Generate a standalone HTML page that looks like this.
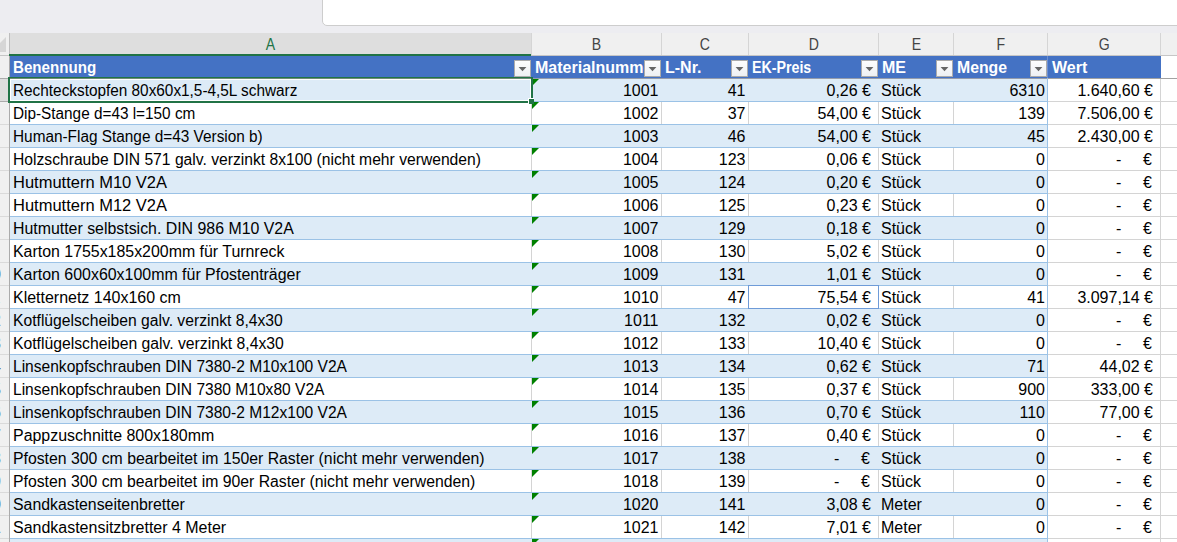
<!DOCTYPE html><html><head><meta charset="utf-8"><style>
html,body{margin:0;padding:0;}
body{width:1177px;height:542px;overflow:hidden;position:relative;background:#fff;font-family:"Liberation Sans",sans-serif;}
div{position:absolute;box-sizing:border-box;}
.t{white-space:nowrap;font-size:16px;line-height:22px;color:#000;}
.r{text-align:right;}
.h{white-space:nowrap;font-size:16px;font-weight:bold;line-height:22px;color:#fff;}
.fb{width:17px;height:17px;border:1px solid #ABABAB;background:linear-gradient(#FDFDFD,#EEF0F3);}
.tri{width:0;height:0;border-top:7px solid #008000;border-right:7px solid transparent;}
.cl{font-size:16px;line-height:22px;color:#444;text-align:center;}
</style></head><body>
<div style="left:0;top:0;width:1177px;height:33px;background:#EDEDF1;"></div>
<div style="left:322px;top:-6px;width:900px;height:32px;background:#fff;border:1px solid #CDCDCD;border-radius:5px;"></div>
<div style="left:0;top:33px;width:1177px;height:23px;background:#F0F0F0;border-bottom:1px solid #C6C6C6;"></div>
<div style="left:10px;top:33px;width:521px;height:23px;background:#DEDEDE;border-bottom:2px solid #217346;"></div>
<div style="left:9px;top:54px;width:1px;height:2px;background:#217346;"></div>
<div style="left:-9px;top:37px;width:0;height:0;border-bottom:15px solid #D6D6D6;border-left:15px solid transparent;"></div>
<div class="cl" style="left:10px;top:34px;width:521px;color:#217346;"><span style="display:inline-block;transform:scaleX(0.88);">A</span></div>
<div class="cl" style="left:532px;top:34px;width:129px;color:#444;"><span style="display:inline-block;transform:scaleX(0.88);">B</span></div>
<div class="cl" style="left:662px;top:34px;width:86px;color:#444;"><span style="display:inline-block;transform:scaleX(0.88);">C</span></div>
<div class="cl" style="left:749px;top:34px;width:129px;color:#444;"><span style="display:inline-block;transform:scaleX(0.88);">D</span></div>
<div class="cl" style="left:879px;top:34px;width:74px;color:#444;"><span style="display:inline-block;transform:scaleX(0.88);">E</span></div>
<div class="cl" style="left:954px;top:34px;width:93px;color:#444;"><span style="display:inline-block;transform:scaleX(0.88);">F</span></div>
<div class="cl" style="left:1048px;top:34px;width:112px;color:#444;"><span style="display:inline-block;transform:scaleX(0.88);">G</span></div>
<div style="left:531px;top:33px;width:1px;height:22px;background:#D5D5D5;"></div>
<div style="left:661px;top:33px;width:1px;height:22px;background:#D5D5D5;"></div>
<div style="left:748px;top:33px;width:1px;height:22px;background:#D5D5D5;"></div>
<div style="left:878px;top:33px;width:1px;height:22px;background:#D5D5D5;"></div>
<div style="left:953px;top:33px;width:1px;height:22px;background:#D5D5D5;"></div>
<div style="left:1047px;top:33px;width:1px;height:22px;background:#D5D5D5;"></div>
<div style="left:1160px;top:33px;width:1px;height:22px;background:#D5D5D5;"></div>
<div style="left:9px;top:33px;width:1px;height:21px;background:#BDBDBD;"></div>
<div style="left:1160px;top:33px;width:1px;height:22px;background:#D5D5D5;"></div>
<div style="left:0;top:56px;width:9px;height:486px;background:#F0F0F0;"></div>
<div style="left:0;top:79px;width:9px;height:22px;background:#DEDEDE;"></div>
<div style="left:9px;top:56px;width:1px;height:486px;background:#ABABAB;"></div>
<div style="left:0;top:78px;width:9px;height:1px;background:#ABABAB;"></div>
<div style="left:0;top:101px;width:9px;height:1px;background:#ABABAB;"></div>
<div style="left:0;top:124px;width:9px;height:1px;background:#DADADA;"></div>
<div style="left:0;top:147px;width:9px;height:1px;background:#DADADA;"></div>
<div style="left:0;top:170px;width:9px;height:1px;background:#DADADA;"></div>
<div style="left:0;top:193px;width:9px;height:1px;background:#DADADA;"></div>
<div style="left:0;top:216px;width:9px;height:1px;background:#DADADA;"></div>
<div style="left:0;top:239px;width:9px;height:1px;background:#DADADA;"></div>
<div style="left:0;top:262px;width:9px;height:1px;background:#DADADA;"></div>
<div style="left:0;top:285px;width:9px;height:1px;background:#DADADA;"></div>
<div style="left:0;top:308px;width:9px;height:1px;background:#DADADA;"></div>
<div style="left:0;top:331px;width:9px;height:1px;background:#DADADA;"></div>
<div style="left:0;top:354px;width:9px;height:1px;background:#DADADA;"></div>
<div style="left:0;top:377px;width:9px;height:1px;background:#DADADA;"></div>
<div style="left:0;top:400px;width:9px;height:1px;background:#DADADA;"></div>
<div style="left:0;top:423px;width:9px;height:1px;background:#DADADA;"></div>
<div style="left:0;top:446px;width:9px;height:1px;background:#DADADA;"></div>
<div style="left:0;top:469px;width:9px;height:1px;background:#DADADA;"></div>
<div style="left:0;top:492px;width:9px;height:1px;background:#DADADA;"></div>
<div style="left:0;top:515px;width:9px;height:1px;background:#DADADA;"></div>
<div style="left:0;top:538px;width:9px;height:1px;background:#DADADA;"></div>
<div style="left:0;top:561px;width:9px;height:1px;background:#DADADA;"></div>
<div style="left:0;top:56px;width:9px;height:22px;overflow:hidden;"><div class="t" style="left:-28px;top:1px;width:40px;text-align:center;color:#444;font-size:16px;">1</div></div>
<div style="left:0;top:79px;width:9px;height:22px;overflow:hidden;"><div class="t" style="left:-28px;top:1px;width:40px;text-align:center;color:#444;font-size:16px;">2</div></div>
<div style="left:0;top:102px;width:9px;height:22px;overflow:hidden;"><div class="t" style="left:-28px;top:1px;width:40px;text-align:center;color:#444;font-size:16px;">3</div></div>
<div style="left:0;top:125px;width:9px;height:22px;overflow:hidden;"><div class="t" style="left:-28px;top:1px;width:40px;text-align:center;color:#444;font-size:16px;">4</div></div>
<div style="left:0;top:148px;width:9px;height:22px;overflow:hidden;"><div class="t" style="left:-28px;top:1px;width:40px;text-align:center;color:#444;font-size:16px;">5</div></div>
<div style="left:0;top:171px;width:9px;height:22px;overflow:hidden;"><div class="t" style="left:-28px;top:1px;width:40px;text-align:center;color:#444;font-size:16px;">6</div></div>
<div style="left:0;top:194px;width:9px;height:22px;overflow:hidden;"><div class="t" style="left:-28px;top:1px;width:40px;text-align:center;color:#444;font-size:16px;">7</div></div>
<div style="left:0;top:217px;width:9px;height:22px;overflow:hidden;"><div class="t" style="left:-28px;top:1px;width:40px;text-align:center;color:#444;font-size:16px;">8</div></div>
<div style="left:0;top:240px;width:9px;height:22px;overflow:hidden;"><div class="t" style="left:-28px;top:1px;width:40px;text-align:center;color:#444;font-size:16px;">9</div></div>
<div style="left:0;top:263px;width:9px;height:22px;overflow:hidden;"><div class="t" style="left:-28px;top:1px;width:40px;text-align:center;color:#444;font-size:16px;">10</div></div>
<div style="left:0;top:286px;width:9px;height:22px;overflow:hidden;"><div class="t" style="left:-28px;top:1px;width:40px;text-align:center;color:#444;font-size:16px;">11</div></div>
<div style="left:0;top:309px;width:9px;height:22px;overflow:hidden;"><div class="t" style="left:-28px;top:1px;width:40px;text-align:center;color:#444;font-size:16px;">12</div></div>
<div style="left:0;top:332px;width:9px;height:22px;overflow:hidden;"><div class="t" style="left:-28px;top:1px;width:40px;text-align:center;color:#444;font-size:16px;">13</div></div>
<div style="left:0;top:355px;width:9px;height:22px;overflow:hidden;"><div class="t" style="left:-28px;top:1px;width:40px;text-align:center;color:#444;font-size:16px;">14</div></div>
<div style="left:0;top:378px;width:9px;height:22px;overflow:hidden;"><div class="t" style="left:-28px;top:1px;width:40px;text-align:center;color:#444;font-size:16px;">15</div></div>
<div style="left:0;top:401px;width:9px;height:22px;overflow:hidden;"><div class="t" style="left:-28px;top:1px;width:40px;text-align:center;color:#444;font-size:16px;">16</div></div>
<div style="left:0;top:424px;width:9px;height:22px;overflow:hidden;"><div class="t" style="left:-28px;top:1px;width:40px;text-align:center;color:#444;font-size:16px;">17</div></div>
<div style="left:0;top:447px;width:9px;height:22px;overflow:hidden;"><div class="t" style="left:-28px;top:1px;width:40px;text-align:center;color:#444;font-size:16px;">18</div></div>
<div style="left:0;top:470px;width:9px;height:22px;overflow:hidden;"><div class="t" style="left:-28px;top:1px;width:40px;text-align:center;color:#444;font-size:16px;">19</div></div>
<div style="left:0;top:493px;width:9px;height:22px;overflow:hidden;"><div class="t" style="left:-28px;top:1px;width:40px;text-align:center;color:#444;font-size:16px;">20</div></div>
<div style="left:0;top:516px;width:9px;height:22px;overflow:hidden;"><div class="t" style="left:-28px;top:1px;width:40px;text-align:center;color:#444;font-size:16px;">21</div></div>
<div style="left:0;top:539px;width:9px;height:22px;overflow:hidden;"><div class="t" style="left:-28px;top:1px;width:40px;text-align:center;color:#444;font-size:16px;">22</div></div>
<div style="left:0;top:33px;width:9px;height:509px;"></div>
<div style="left:10px;top:78px;width:1167px;height:1px;background:#D4D4D4;"></div>
<div style="left:10px;top:101px;width:1167px;height:1px;background:#D4D4D4;"></div>
<div style="left:10px;top:124px;width:1167px;height:1px;background:#D4D4D4;"></div>
<div style="left:10px;top:147px;width:1167px;height:1px;background:#D4D4D4;"></div>
<div style="left:10px;top:170px;width:1167px;height:1px;background:#D4D4D4;"></div>
<div style="left:10px;top:193px;width:1167px;height:1px;background:#D4D4D4;"></div>
<div style="left:10px;top:216px;width:1167px;height:1px;background:#D4D4D4;"></div>
<div style="left:10px;top:239px;width:1167px;height:1px;background:#D4D4D4;"></div>
<div style="left:10px;top:262px;width:1167px;height:1px;background:#D4D4D4;"></div>
<div style="left:10px;top:285px;width:1167px;height:1px;background:#D4D4D4;"></div>
<div style="left:10px;top:308px;width:1167px;height:1px;background:#D4D4D4;"></div>
<div style="left:10px;top:331px;width:1167px;height:1px;background:#D4D4D4;"></div>
<div style="left:10px;top:354px;width:1167px;height:1px;background:#D4D4D4;"></div>
<div style="left:10px;top:377px;width:1167px;height:1px;background:#D4D4D4;"></div>
<div style="left:10px;top:400px;width:1167px;height:1px;background:#D4D4D4;"></div>
<div style="left:10px;top:423px;width:1167px;height:1px;background:#D4D4D4;"></div>
<div style="left:10px;top:446px;width:1167px;height:1px;background:#D4D4D4;"></div>
<div style="left:10px;top:469px;width:1167px;height:1px;background:#D4D4D4;"></div>
<div style="left:10px;top:492px;width:1167px;height:1px;background:#D4D4D4;"></div>
<div style="left:10px;top:515px;width:1167px;height:1px;background:#D4D4D4;"></div>
<div style="left:10px;top:538px;width:1167px;height:1px;background:#D4D4D4;"></div>
<div style="left:10px;top:561px;width:1167px;height:1px;background:#D4D4D4;"></div>
<div style="left:531px;top:56px;width:1px;height:486px;background:#D4D4D4;"></div>
<div style="left:661px;top:56px;width:1px;height:486px;background:#D4D4D4;"></div>
<div style="left:748px;top:56px;width:1px;height:486px;background:#D4D4D4;"></div>
<div style="left:878px;top:56px;width:1px;height:486px;background:#D4D4D4;"></div>
<div style="left:953px;top:56px;width:1px;height:486px;background:#D4D4D4;"></div>
<div style="left:1047px;top:56px;width:1px;height:486px;background:#D4D4D4;"></div>
<div style="left:1160px;top:56px;width:1px;height:486px;background:#D4D4D4;"></div>
<div style="left:10px;top:56px;width:1151px;height:22px;background:#4472C4;"></div>
<div style="left:1047px;top:56px;width:1px;height:22px;background:#6E90D2;"></div>
<div style="left:10px;top:78px;width:1167px;height:1px;background:#A2A2A2;"></div>
<div style="left:10px;top:78px;width:1037px;height:24px;background:#DDEBF7;border-top:1px solid #9BC2E6;border-bottom:1px solid #9BC2E6;"></div>
<div style="left:10px;top:124px;width:1037px;height:24px;background:#DDEBF7;border-top:1px solid #9BC2E6;border-bottom:1px solid #9BC2E6;"></div>
<div style="left:10px;top:170px;width:1037px;height:24px;background:#DDEBF7;border-top:1px solid #9BC2E6;border-bottom:1px solid #9BC2E6;"></div>
<div style="left:10px;top:216px;width:1037px;height:24px;background:#DDEBF7;border-top:1px solid #9BC2E6;border-bottom:1px solid #9BC2E6;"></div>
<div style="left:10px;top:262px;width:1037px;height:24px;background:#DDEBF7;border-top:1px solid #9BC2E6;border-bottom:1px solid #9BC2E6;"></div>
<div style="left:10px;top:308px;width:1037px;height:24px;background:#DDEBF7;border-top:1px solid #9BC2E6;border-bottom:1px solid #9BC2E6;"></div>
<div style="left:10px;top:354px;width:1037px;height:24px;background:#DDEBF7;border-top:1px solid #9BC2E6;border-bottom:1px solid #9BC2E6;"></div>
<div style="left:10px;top:400px;width:1037px;height:24px;background:#DDEBF7;border-top:1px solid #9BC2E6;border-bottom:1px solid #9BC2E6;"></div>
<div style="left:10px;top:446px;width:1037px;height:24px;background:#DDEBF7;border-top:1px solid #9BC2E6;border-bottom:1px solid #9BC2E6;"></div>
<div style="left:10px;top:492px;width:1037px;height:24px;background:#DDEBF7;border-top:1px solid #9BC2E6;border-bottom:1px solid #9BC2E6;"></div>
<div style="left:10px;top:538px;width:1037px;height:24px;background:#DDEBF7;border-top:1px solid #9BC2E6;border-bottom:1px solid #9BC2E6;"></div>
<div style="left:10px;top:78px;width:1037px;height:1px;background:#959CAB;"></div>
<div style="left:1047px;top:78px;width:1px;height:464px;background:#9BC2E6;"></div>
<div style="left:10px;top:56px;width:521px;height:22px;overflow:hidden;"><div class="h" style="left:3px;top:1px;transform-origin:0 0;transform:scaleX(0.945);">Benennung</div></div>
<div class="fb" style="left:514px;top:60px;"><svg width="15" height="15" style="position:absolute;left:0;top:0"><polygon points="3.6,6 11.4,6 7.5,10.2" fill="#666"/></svg></div>
<div style="left:532px;top:56px;width:129px;height:22px;overflow:hidden;"><div class="h" style="left:3px;top:1px;transform-origin:0 0;transform:scaleX(1.000);">Materialnummer</div></div>
<div class="fb" style="left:644px;top:60px;"><svg width="15" height="15" style="position:absolute;left:0;top:0"><polygon points="3.6,6 11.4,6 7.5,10.2" fill="#666"/></svg></div>
<div style="left:662px;top:56px;width:86px;height:22px;overflow:hidden;"><div class="h" style="left:3px;top:1px;transform-origin:0 0;transform:scaleX(1.000);">L-Nr.</div></div>
<div class="fb" style="left:731px;top:60px;"><svg width="15" height="15" style="position:absolute;left:0;top:0"><polygon points="3.6,6 11.4,6 7.5,10.2" fill="#666"/></svg></div>
<div style="left:749px;top:56px;width:129px;height:22px;overflow:hidden;"><div class="h" style="left:3px;top:1px;transform-origin:0 0;transform:scaleX(0.888);">EK-Preis</div></div>
<div class="fb" style="left:861px;top:60px;"><svg width="15" height="15" style="position:absolute;left:0;top:0"><polygon points="3.6,6 11.4,6 7.5,10.2" fill="#666"/></svg></div>
<div style="left:879px;top:56px;width:74px;height:22px;overflow:hidden;"><div class="h" style="left:3px;top:1px;transform-origin:0 0;transform:scaleX(1.000);">ME</div></div>
<div class="fb" style="left:936px;top:60px;"><svg width="15" height="15" style="position:absolute;left:0;top:0"><polygon points="3.6,6 11.4,6 7.5,10.2" fill="#666"/></svg></div>
<div style="left:954px;top:56px;width:93px;height:22px;overflow:hidden;"><div class="h" style="left:3px;top:1px;transform-origin:0 0;transform:scaleX(0.987);">Menge</div></div>
<div class="fb" style="left:1030px;top:60px;"><svg width="15" height="15" style="position:absolute;left:0;top:0"><polygon points="3.6,6 11.4,6 7.5,10.2" fill="#666"/></svg></div>
<div style="left:1048px;top:56px;width:112px;height:22px;overflow:hidden;"><div class="h" style="left:4px;top:1px;transform-origin:0 0;transform:scaleX(1.000);">Wert</div></div>
<div class="t" style="left:13px;top:80px;transform-origin:0 0;transform:scaleX(0.9592);">Rechteckstopfen 80x60x1,5-4,5L schwarz</div>
<div class="t r" style="left:531px;top:80px;width:127.5px;">1001</div>
<div class="t r" style="left:661px;top:80px;width:84.5px;">41</div>
<div class="t r" style="left:748px;top:80px;width:123px;">0,26 €</div>
<div class="t" style="left:881px;top:80px;">Stück</div>
<div class="t r" style="left:953px;top:80px;width:92px;">6310</div>
<div class="t r" style="left:1047px;top:80px;width:106px;">1.640,60 €</div>
<div class="tri" style="left:532px;top:79px;"></div>
<div class="t" style="left:13px;top:103px;transform-origin:0 0;transform:scaleX(0.9578);">Dip-Stange d=43 l=150 cm</div>
<div class="t r" style="left:531px;top:103px;width:127.5px;">1002</div>
<div class="t r" style="left:661px;top:103px;width:84.5px;">37</div>
<div class="t r" style="left:748px;top:103px;width:123px;">54,00 €</div>
<div class="t" style="left:881px;top:103px;">Stück</div>
<div class="t r" style="left:953px;top:103px;width:92px;">139</div>
<div class="t r" style="left:1047px;top:103px;width:106px;">7.506,00 €</div>
<div class="tri" style="left:532px;top:102px;"></div>
<div class="t" style="left:13px;top:126px;transform-origin:0 0;transform:scaleX(0.9599);">Human-Flag Stange d=43 Version b)</div>
<div class="t r" style="left:531px;top:126px;width:127.5px;">1003</div>
<div class="t r" style="left:661px;top:126px;width:84.5px;">46</div>
<div class="t r" style="left:748px;top:126px;width:123px;">54,00 €</div>
<div class="t" style="left:881px;top:126px;">Stück</div>
<div class="t r" style="left:953px;top:126px;width:92px;">45</div>
<div class="t r" style="left:1047px;top:126px;width:106px;">2.430,00 €</div>
<div class="tri" style="left:532px;top:125px;"></div>
<div class="t" style="left:13px;top:149px;transform-origin:0 0;transform:scaleX(0.9787);">Holzschraube DIN 571 galv. verzinkt 8x100 (nicht mehr verwenden)</div>
<div class="t r" style="left:531px;top:149px;width:127.5px;">1004</div>
<div class="t r" style="left:661px;top:149px;width:84.5px;">123</div>
<div class="t r" style="left:748px;top:149px;width:123px;">0,06 €</div>
<div class="t" style="left:881px;top:149px;">Stück</div>
<div class="t r" style="left:953px;top:149px;width:92px;">0</div>
<div class="t" style="left:1116px;top:149px;">-</div>
<div class="t" style="left:1143px;top:149px;">€</div>
<div class="tri" style="left:532px;top:148px;"></div>
<div class="t" style="left:13px;top:172px;transform-origin:0 0;transform:scaleX(1.0306);">Hutmuttern M10 V2A</div>
<div class="t r" style="left:531px;top:172px;width:127.5px;">1005</div>
<div class="t r" style="left:661px;top:172px;width:84.5px;">124</div>
<div class="t r" style="left:748px;top:172px;width:123px;">0,20 €</div>
<div class="t" style="left:881px;top:172px;">Stück</div>
<div class="t r" style="left:953px;top:172px;width:92px;">0</div>
<div class="t" style="left:1116px;top:172px;">-</div>
<div class="t" style="left:1143px;top:172px;">€</div>
<div class="tri" style="left:532px;top:171px;"></div>
<div class="t" style="left:13px;top:195px;transform-origin:0 0;transform:scaleX(1.0306);">Hutmuttern M12 V2A</div>
<div class="t r" style="left:531px;top:195px;width:127.5px;">1006</div>
<div class="t r" style="left:661px;top:195px;width:84.5px;">125</div>
<div class="t r" style="left:748px;top:195px;width:123px;">0,23 €</div>
<div class="t" style="left:881px;top:195px;">Stück</div>
<div class="t r" style="left:953px;top:195px;width:92px;">0</div>
<div class="t" style="left:1116px;top:195px;">-</div>
<div class="t" style="left:1143px;top:195px;">€</div>
<div class="tri" style="left:532px;top:194px;"></div>
<div class="t" style="left:13px;top:218px;transform-origin:0 0;transform:scaleX(0.9929);">Hutmutter selbstsich. DIN 986 M10 V2A</div>
<div class="t r" style="left:531px;top:218px;width:127.5px;">1007</div>
<div class="t r" style="left:661px;top:218px;width:84.5px;">129</div>
<div class="t r" style="left:748px;top:218px;width:123px;">0,18 €</div>
<div class="t" style="left:881px;top:218px;">Stück</div>
<div class="t r" style="left:953px;top:218px;width:92px;">0</div>
<div class="t" style="left:1116px;top:218px;">-</div>
<div class="t" style="left:1143px;top:218px;">€</div>
<div class="tri" style="left:532px;top:217px;"></div>
<div class="t" style="left:13px;top:241px;transform-origin:0 0;transform:scaleX(0.9941);">Karton 1755x185x200mm für Turnreck</div>
<div class="t r" style="left:531px;top:241px;width:127.5px;">1008</div>
<div class="t r" style="left:661px;top:241px;width:84.5px;">130</div>
<div class="t r" style="left:748px;top:241px;width:123px;">5,02 €</div>
<div class="t" style="left:881px;top:241px;">Stück</div>
<div class="t r" style="left:953px;top:241px;width:92px;">0</div>
<div class="t" style="left:1116px;top:241px;">-</div>
<div class="t" style="left:1143px;top:241px;">€</div>
<div class="tri" style="left:532px;top:240px;"></div>
<div class="t" style="left:13px;top:264px;transform-origin:0 0;transform:scaleX(0.9955);">Karton 600x60x100mm für Pfostenträger</div>
<div class="t r" style="left:531px;top:264px;width:127.5px;">1009</div>
<div class="t r" style="left:661px;top:264px;width:84.5px;">131</div>
<div class="t r" style="left:748px;top:264px;width:123px;">1,01 €</div>
<div class="t" style="left:881px;top:264px;">Stück</div>
<div class="t r" style="left:953px;top:264px;width:92px;">0</div>
<div class="t" style="left:1116px;top:264px;">-</div>
<div class="t" style="left:1143px;top:264px;">€</div>
<div class="tri" style="left:532px;top:263px;"></div>
<div class="t" style="left:13px;top:287px;transform-origin:0 0;transform:scaleX(0.9982);">Kletternetz 140x160 cm</div>
<div class="t r" style="left:531px;top:287px;width:127.5px;">1010</div>
<div class="t r" style="left:661px;top:287px;width:84.5px;">47</div>
<div class="t r" style="left:748px;top:287px;width:123px;">75,54 €</div>
<div class="t" style="left:881px;top:287px;">Stück</div>
<div class="t r" style="left:953px;top:287px;width:92px;">41</div>
<div class="t r" style="left:1047px;top:287px;width:106px;">3.097,14 €</div>
<div class="tri" style="left:532px;top:286px;"></div>
<div class="t" style="left:13px;top:310px;transform-origin:0 0;transform:scaleX(0.9795);">Kotflügelscheiben galv. verzinkt 8,4x30</div>
<div class="t r" style="left:531px;top:310px;width:127.5px;">1011</div>
<div class="t r" style="left:661px;top:310px;width:84.5px;">132</div>
<div class="t r" style="left:748px;top:310px;width:123px;">0,02 €</div>
<div class="t" style="left:881px;top:310px;">Stück</div>
<div class="t r" style="left:953px;top:310px;width:92px;">0</div>
<div class="t" style="left:1116px;top:310px;">-</div>
<div class="t" style="left:1143px;top:310px;">€</div>
<div class="tri" style="left:532px;top:309px;"></div>
<div class="t" style="left:13px;top:333px;transform-origin:0 0;transform:scaleX(0.9832);">Kotflügelscheiben galv. verzinkt 8,4x30</div>
<div class="t r" style="left:531px;top:333px;width:127.5px;">1012</div>
<div class="t r" style="left:661px;top:333px;width:84.5px;">133</div>
<div class="t r" style="left:748px;top:333px;width:123px;">10,40 €</div>
<div class="t" style="left:881px;top:333px;">Stück</div>
<div class="t r" style="left:953px;top:333px;width:92px;">0</div>
<div class="t" style="left:1116px;top:333px;">-</div>
<div class="t" style="left:1143px;top:333px;">€</div>
<div class="tri" style="left:532px;top:332px;"></div>
<div class="t" style="left:13px;top:356px;transform-origin:0 0;transform:scaleX(0.9727);">Linsenkopfschrauben DIN 7380-2 M10x100 V2A</div>
<div class="t r" style="left:531px;top:356px;width:127.5px;">1013</div>
<div class="t r" style="left:661px;top:356px;width:84.5px;">134</div>
<div class="t r" style="left:748px;top:356px;width:123px;">0,62 €</div>
<div class="t" style="left:881px;top:356px;">Stück</div>
<div class="t r" style="left:953px;top:356px;width:92px;">71</div>
<div class="t r" style="left:1047px;top:356px;width:106px;">44,02 €</div>
<div class="tri" style="left:532px;top:355px;"></div>
<div class="t" style="left:13px;top:379px;transform-origin:0 0;transform:scaleX(0.9726);">Linsenkopfschrauben DIN 7380 M10x80 V2A</div>
<div class="t r" style="left:531px;top:379px;width:127.5px;">1014</div>
<div class="t r" style="left:661px;top:379px;width:84.5px;">135</div>
<div class="t r" style="left:748px;top:379px;width:123px;">0,37 €</div>
<div class="t" style="left:881px;top:379px;">Stück</div>
<div class="t r" style="left:953px;top:379px;width:92px;">900</div>
<div class="t r" style="left:1047px;top:379px;width:106px;">333,00 €</div>
<div class="tri" style="left:532px;top:378px;"></div>
<div class="t" style="left:13px;top:402px;transform-origin:0 0;transform:scaleX(0.9727);">Linsenkopfschrauben DIN 7380-2 M12x100 V2A</div>
<div class="t r" style="left:531px;top:402px;width:127.5px;">1015</div>
<div class="t r" style="left:661px;top:402px;width:84.5px;">136</div>
<div class="t r" style="left:748px;top:402px;width:123px;">0,70 €</div>
<div class="t" style="left:881px;top:402px;">Stück</div>
<div class="t r" style="left:953px;top:402px;width:92px;">110</div>
<div class="t r" style="left:1047px;top:402px;width:106px;">77,00 €</div>
<div class="tri" style="left:532px;top:401px;"></div>
<div class="t" style="left:13px;top:425px;transform-origin:0 0;transform:scaleX(0.9965);">Pappzuschnitte 800x180mm</div>
<div class="t r" style="left:531px;top:425px;width:127.5px;">1016</div>
<div class="t r" style="left:661px;top:425px;width:84.5px;">137</div>
<div class="t r" style="left:748px;top:425px;width:123px;">0,40 €</div>
<div class="t" style="left:881px;top:425px;">Stück</div>
<div class="t r" style="left:953px;top:425px;width:92px;">0</div>
<div class="t" style="left:1116px;top:425px;">-</div>
<div class="t" style="left:1143px;top:425px;">€</div>
<div class="tri" style="left:532px;top:424px;"></div>
<div class="t" style="left:13px;top:448px;transform-origin:0 0;transform:scaleX(0.9874);">Pfosten 300 cm bearbeitet im 150er Raster (nicht mehr verwenden)</div>
<div class="t r" style="left:531px;top:448px;width:127.5px;">1017</div>
<div class="t r" style="left:661px;top:448px;width:84.5px;">138</div>
<div class="t" style="left:834px;top:448px;">-</div>
<div class="t" style="left:861px;top:448px;">€</div>
<div class="t" style="left:881px;top:448px;">Stück</div>
<div class="t r" style="left:953px;top:448px;width:92px;">0</div>
<div class="t" style="left:1116px;top:448px;">-</div>
<div class="t" style="left:1143px;top:448px;">€</div>
<div class="tri" style="left:532px;top:447px;"></div>
<div class="t" style="left:13px;top:471px;transform-origin:0 0;transform:scaleX(0.9865);">Pfosten 300 cm bearbeitet im 90er Raster (nicht mehr verwenden)</div>
<div class="t r" style="left:531px;top:471px;width:127.5px;">1018</div>
<div class="t r" style="left:661px;top:471px;width:84.5px;">139</div>
<div class="t" style="left:834px;top:471px;">-</div>
<div class="t" style="left:861px;top:471px;">€</div>
<div class="t" style="left:881px;top:471px;">Stück</div>
<div class="t r" style="left:953px;top:471px;width:92px;">0</div>
<div class="t" style="left:1116px;top:471px;">-</div>
<div class="t" style="left:1143px;top:471px;">€</div>
<div class="tri" style="left:532px;top:470px;"></div>
<div class="t" style="left:13px;top:494px;transform-origin:0 0;transform:scaleX(0.9901);">Sandkastenseitenbretter</div>
<div class="t r" style="left:531px;top:494px;width:127.5px;">1020</div>
<div class="t r" style="left:661px;top:494px;width:84.5px;">141</div>
<div class="t r" style="left:748px;top:494px;width:123px;">3,08 €</div>
<div class="t" style="left:881px;top:494px;">Meter</div>
<div class="t r" style="left:953px;top:494px;width:92px;">0</div>
<div class="t" style="left:1116px;top:494px;">-</div>
<div class="t" style="left:1143px;top:494px;">€</div>
<div class="tri" style="left:532px;top:493px;"></div>
<div class="t" style="left:13px;top:517px;transform-origin:0 0;transform:scaleX(0.9986);">Sandkastensitzbretter 4 Meter</div>
<div class="t r" style="left:531px;top:517px;width:127.5px;">1021</div>
<div class="t r" style="left:661px;top:517px;width:84.5px;">142</div>
<div class="t r" style="left:748px;top:517px;width:123px;">7,01 €</div>
<div class="t" style="left:881px;top:517px;">Meter</div>
<div class="t r" style="left:953px;top:517px;width:92px;">0</div>
<div class="t" style="left:1116px;top:517px;">-</div>
<div class="t" style="left:1143px;top:517px;">€</div>
<div class="tri" style="left:532px;top:516px;"></div>
<div class="tri" style="left:532px;top:539px;"></div>
<div style="left:748px;top:285px;width:131px;height:24px;border:1px solid #6E9BD8;background:transparent;"></div>
<div style="left:8px;top:77px;width:525px;height:26px;border:2px solid #217346;border-top:1px solid #217346;"></div>
<div style="left:10px;top:78px;width:521px;height:1px;background:#6F8A78;"></div>
<div style="left:10px;top:79px;width:521px;height:22px;border:1px solid #fff;"></div>
<div style="left:528px;top:98px;width:6px;height:6px;background:#217346;border-left:1px solid #fff;border-top:1px solid #fff;"></div>
</body></html>
